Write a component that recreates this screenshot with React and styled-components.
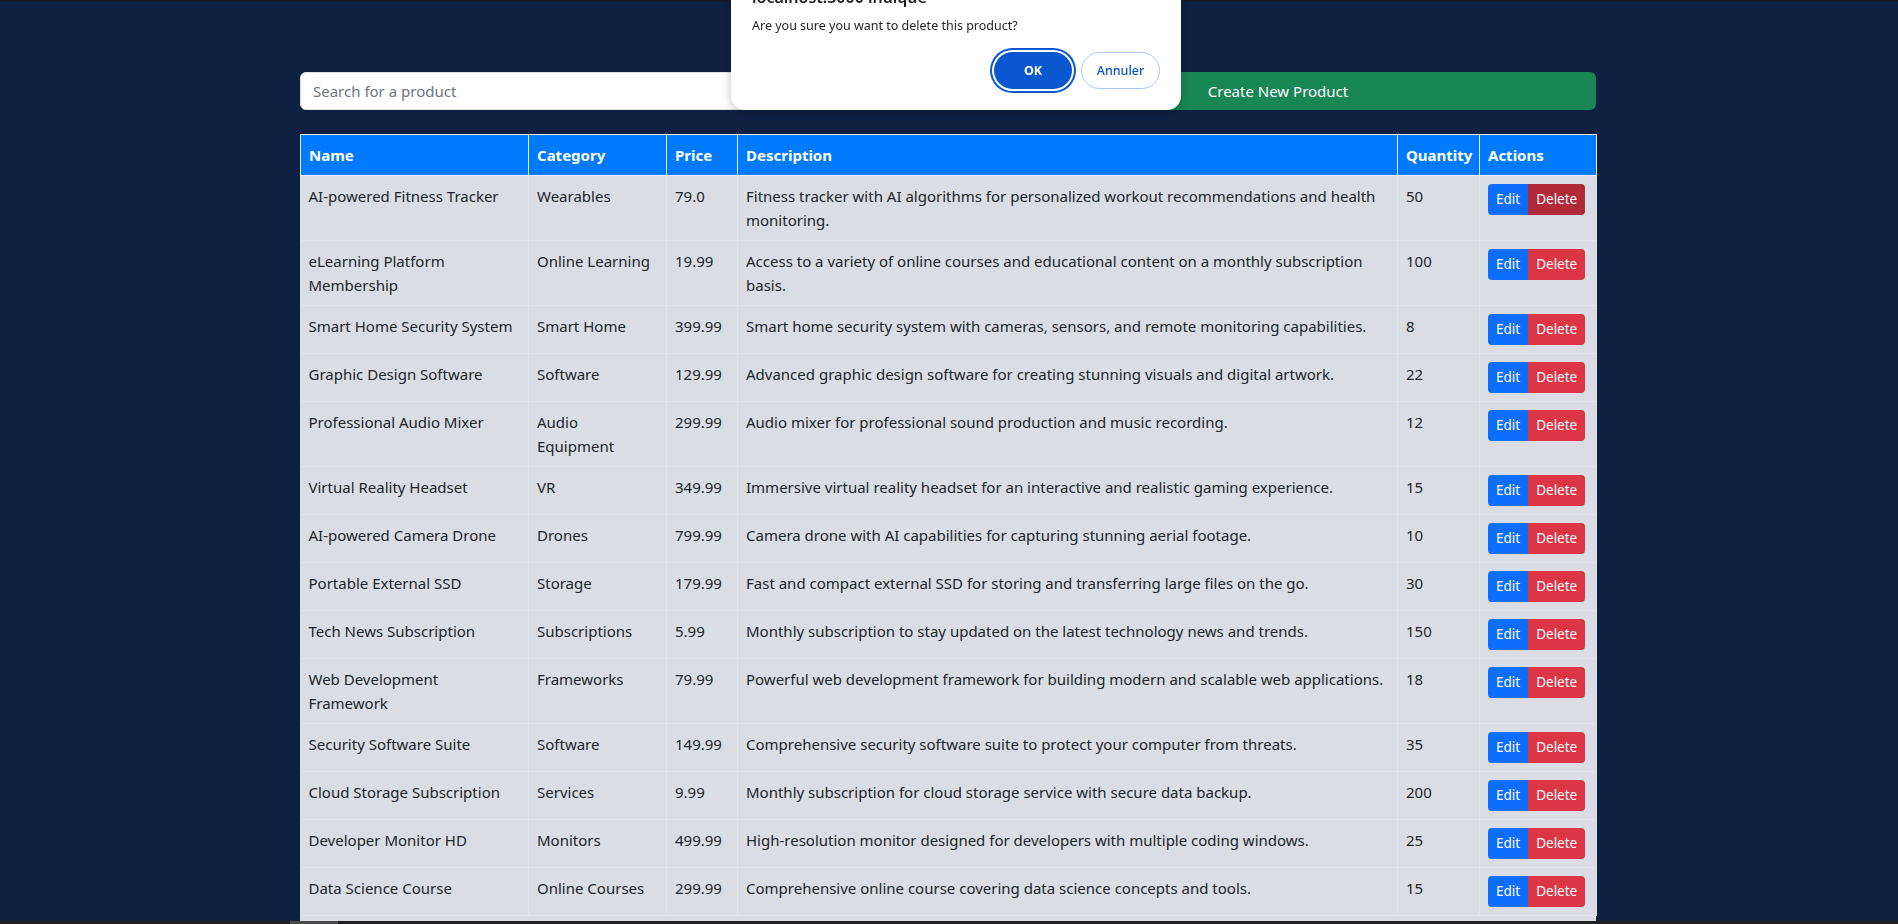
import styled, { createGlobalStyle } from 'styled-components';

const GlobalStyle = createGlobalStyle`
  html, body {
    margin: 0;
    padding: 0;
  }
  body {
    background: #0f2142;
    border-top: 1px solid #1b1b1b;
    font-family: "Noto Sans", "Open Sans", sans-serif;
    color: #212529;
    overflow: hidden;
  }
  * {
    box-sizing: border-box;
  }
`;

const Container = styled.div`
  width: 1296px;
  margin-left: calc(50% - 649px);
  padding-top: 71px;
`;

const Toolbar = styled.div`
  display: grid;
  grid-template-columns: 1fr 1fr;
  gap: 24px;
  margin-bottom: 24px;
`;

const SearchInput = styled.input`
  height: 38px;
  padding: 6px 12px;
  border: 1px solid #dee2e6;
  border-radius: 6px;
  background: #fff;
  font: inherit;
  font-size: 15px;
  color: #212529;
  outline: none;

  &::placeholder {
    color: #6c757d;
  }
`;

const CreateButton = styled.button`
  height: 38px;
  border: none;
  border-radius: 6px;
  background: #198754;
  color: #fff;
  font: inherit;
  font-size: 15px;
  cursor: pointer;
`;

const TableWrap = styled.div`
  background: #dadee4;
  padding-bottom: 12px;
`;

const Table = styled.table`
  width: 100%;
  table-layout: fixed;
  border-collapse: collapse;
  font-size: 15px;
  line-height: 24px;
`;

const HeadCell = styled.th`
  width: ${({ $w }) => $w}px;
  padding: 8px;
  text-align: left;
  font-weight: 700;
  color: #fff;
  background: #007bff;
  border: 1px solid #e9eef5;
`;

const Row = styled.tr`
  background: #dadee4;
`;

const Cell = styled.td`
  padding: 8px;
  vertical-align: top;
  border: 1px solid #e1e4e9;
  border-top: none;

  &:first-child {
    border-left: none;
  }
  &:last-child {
    border-right: none;
  }
`;

const ButtonGroup = styled.div`
  display: inline-flex;
`;

const SmallButton = styled.button`
  height: 31px;
  padding: 4px 8px;
  border: none;
  font: inherit;
  font-size: 13.5px;
  line-height: 21px;
  color: #fff;
  cursor: pointer;
  background: ${({ $variant, $hover }) =>
    $variant === 'danger' ? ($hover ? '#b02a37' : '#dc3545') : '#0d6efd'};

  &:first-child {
    border-radius: 4px 0 0 4px;
  }
  &:last-child {
    border-radius: 0 4px 4px 0;
  }
`;

const Dialog = styled.div`
  position: fixed;
  top: -30px;
  left: 731px;
  width: 450px;
  height: 140px;
  padding: 17px 21px 21px 21px;
  background: #fff;
  border-radius: 14px;
  box-shadow: 0 2px 10px rgba(0, 0, 0, 0.25);
  display: flex;
  flex-direction: column;
`;

const DialogTitle = styled.div`
  font-size: 16px;
  line-height: 20px;
  font-weight: 600;
  color: #1f1f1f;
`;

const DialogMessage = styled.div`
  margin-top: 10px;
  font-size: 12.5px;
  line-height: 18px;
  color: #1f1f1f;
`;

const DialogActions = styled.div`
  margin-top: 17px;
  display: flex;
  justify-content: flex-end;
  gap: 9px;
`;

const PillButton = styled.button`
  height: 37px;
  width: ${({ $primary }) => ($primary ? 78 : 79)}px;
  border-radius: 19px;
  font: inherit;
  font-size: 12.5px;
  font-weight: ${({ $primary }) => ($primary ? 700 : 500)};
  cursor: pointer;
  border: ${({ $primary }) => ($primary ? 'none' : '1px solid #a8c7fa')};
  background: ${({ $primary }) => ($primary ? '#0b57d0' : '#fff')};
  color: ${({ $primary }) => ($primary ? '#fff' : '#0b57d0')};
  box-shadow: ${({ $primary }) =>
    $primary ? '0 0 0 2px #fff, 0 0 0 4px #0b57d0' : 'none'};
`;

const ScrollTrack = styled.div`
  position: fixed;
  left: 0;
  right: 0;
  bottom: 0;
  height: 3px;
  background: #202020;
`;

const ScrollThumb = styled.div`
  margin-left: 290px;
  width: 48px;
  height: 100%;
  background: #4a4a4a;
`;

const columns = [
  { label: 'Name', width: 228 },
  { label: 'Category', width: 138 },
  { label: 'Price', width: 71 },
  { label: 'Description', width: 660 },
  { label: 'Quantity', width: 82 },
  { label: 'Actions', width: 117 },
];

const products = [
  ['AI-powered Fitness Tracker', 'Wearables', '79.0', 'Fitness tracker with AI algorithms for personalized workout recommendations and health monitoring.', 50],
  ['eLearning Platform Membership', 'Online Learning', '19.99', 'Access to a variety of online courses and educational content on a monthly subscription basis.', 100],
  ['Smart Home Security System', 'Smart Home', '399.99', 'Smart home security system with cameras, sensors, and remote monitoring capabilities.', 8],
  ['Graphic Design Software', 'Software', '129.99', 'Advanced graphic design software for creating stunning visuals and digital artwork.', 22],
  ['Professional Audio Mixer', 'Audio Equipment', '299.99', 'Audio mixer for professional sound production and music recording.', 12],
  ['Virtual Reality Headset', 'VR', '349.99', 'Immersive virtual reality headset for an interactive and realistic gaming experience.', 15],
  ['AI-powered Camera Drone', 'Drones', '799.99', 'Camera drone with AI capabilities for capturing stunning aerial footage.', 10],
  ['Portable External SSD', 'Storage', '179.99', 'Fast and compact external SSD for storing and transferring large files on the go.', 30],
  ['Tech News Subscription', 'Subscriptions', '5.99', 'Monthly subscription to stay updated on the latest technology news and trends.', 150],
  ['Web Development Framework', 'Frameworks', '79.99', 'Powerful web development framework for building modern and scalable web applications.', 18],
  ['Security Software Suite', 'Software', '149.99', 'Comprehensive security software suite to protect your computer from threats.', 35],
  ['Cloud Storage Subscription', 'Services', '9.99', 'Monthly subscription for cloud storage service with secure data backup.', 200],
  ['Developer Monitor HD', 'Monitors', '499.99', 'High-resolution monitor designed for developers with multiple coding windows.', 25],
  ['Data Science Course', 'Online Courses', '299.99', 'Comprehensive online course covering data science concepts and tools.', 15],
];

export default function App() {
  return (
    <>
      <GlobalStyle />
      <Container>
        <Toolbar>
          <SearchInput placeholder="Search for a product" />
          <CreateButton>Create New Product</CreateButton>
        </Toolbar>
        <TableWrap>
          <Table>
            <thead>
              <tr>
                {columns.map((c) => (
                  <HeadCell key={c.label} $w={c.width}>
                    {c.label}
                  </HeadCell>
                ))}
              </tr>
            </thead>
            <tbody>
              {products.map(([name, category, price, description, qty], i) => (
                <Row key={name}>
                  <Cell>{name}</Cell>
                  <Cell>{category}</Cell>
                  <Cell>{price}</Cell>
                  <Cell>{description}</Cell>
                  <Cell>{qty}</Cell>
                  <Cell>
                    <ButtonGroup>
                      <SmallButton>Edit</SmallButton>
                      <SmallButton $variant="danger" $hover={i === 0}>
                        Delete
                      </SmallButton>
                    </ButtonGroup>
                  </Cell>
                </Row>
              ))}
            </tbody>
          </Table>
        </TableWrap>
      </Container>

      <Dialog>
        <DialogTitle>localhost:3000 indique</DialogTitle>
        <DialogMessage>Are you sure you want to delete this product?</DialogMessage>
        <DialogActions>
          <PillButton $primary>OK</PillButton>
          <PillButton>Annuler</PillButton>
        </DialogActions>
      </Dialog>

      <ScrollTrack>
        <ScrollThumb />
      </ScrollTrack>
    </>
  );
}
